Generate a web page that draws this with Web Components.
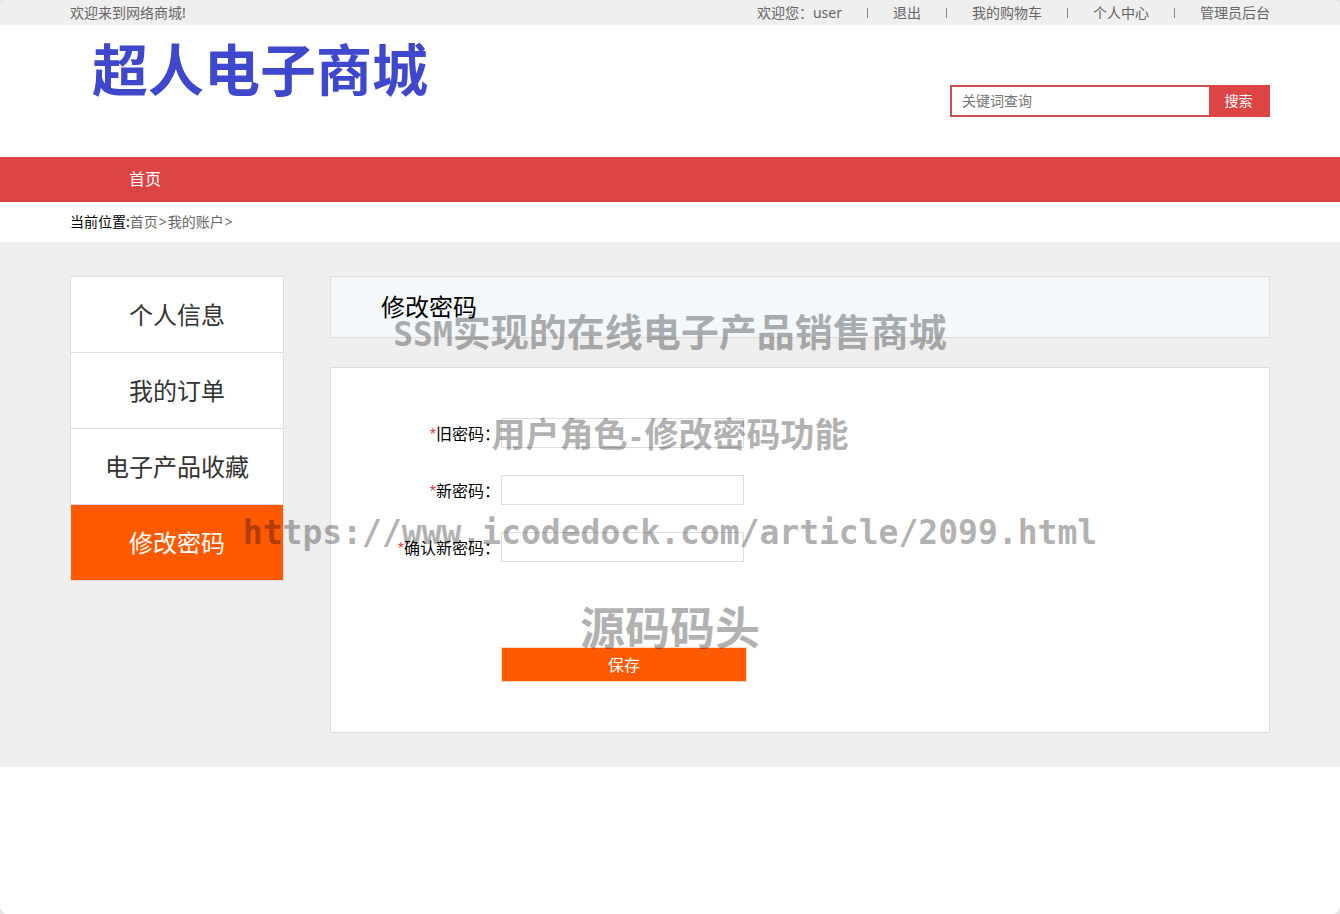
<!DOCTYPE html>
<html lang="zh-CN">
<head>
<meta charset="utf-8">
<meta name="viewport" content="width=device-width, initial-scale=1">
<title>修改密码</title>
<style>
  html { background: #e4e4e4; }
  body {
    margin: 0;
    font: 14px/24px "Noto Sans", "Noto Sans CJK SC", sans-serif;
    color: #000;
  }
</style>
</head>
<body>
<store-page>
  <top-bar slot="top"></top-bar>
  <store-header slot="top"></store-header>
  <store-nav slot="top"></store-nav>
  <bread-crumb slot="top"></bread-crumb>
  <account-menu slot="side"></account-menu>
  <page-title>修改密码</page-title>
  <password-form></password-form>
  <water-mark slot="overlay"></water-mark>
</store-page>

<script>
  const define = (name, html) => {
    const template = document.createElement('template');
    template.innerHTML = html;
    customElements.define(name, class extends HTMLElement {
      constructor() {
        super();
        this.attachShadow({ mode: 'open' }).append(template.content.cloneNode(true));
      }
    });
  };

  define('store-page', `
    <style>
      :host { display: block; position: relative; min-height: 100vh; background: #fff; border-radius: 8px; overflow: hidden; }
      main { background: #efefef; padding: 34px 0; }
      .row { display: grid; grid-template-columns: 214px minmax(0, 1fr); gap: 46px; align-items: start; max-width: 1200px; margin: 0 auto; }
      .content { display: grid; gap: 29px; }
    </style>
    <slot name="top"></slot>
    <main>
      <div class="row">
        <slot name="side"></slot>
        <div class="content"><slot></slot></div>
      </div>
    </main>
    <slot name="overlay"></slot>`);

  define('top-bar', `
    <style>
      :host { display: block; background: #efefef; color: #666; line-height: 25px; }
      .inner { display: flex; justify-content: space-between; max-width: 1200px; margin: 0 auto; }
      nav { display: flex; align-items: center; gap: 25px; }
      i { width: 1px; height: 10px; background: #888; }
      a { color: inherit; text-decoration: none; }
    </style>
    <div class="inner">
      <span>欢迎来到网络商城!</span>
      <nav>
        <span>欢迎您：user</span><i></i>
        <a href="#logout">退出</a><i></i>
        <a href="#cart">我的购物车</a><i></i>
        <a href="#account">个人中心</a><i></i>
        <a href="#admin">管理员后台</a>
      </nav>
    </div>`);

  define('store-header', `
    <style>
      :host { display: block; }
      .inner { display: flex; justify-content: space-between; align-items: flex-start; max-width: 1200px; margin: 0 auto; height: 132px; }
      .logo { margin: 16px 0 0 22px; font-size: 56px; line-height: 56px; font-weight: 700; color: #3f48cc; text-decoration: none; }
      form { display: flex; margin-top: 60px; width: 320px; height: 32px; }
      input { box-sizing: border-box; flex: 1; min-width: 0; border: 2px solid #c95150; border-right: 0; padding: 0 10px; font: inherit; background: #fff; outline: 0; }
      input::placeholder { color: #757575; opacity: 1; }
      button { width: 61px; border: 0; padding: 0 2px 0 0; background: #dd4545; color: #fff; font: inherit; }
    </style>
    <div class="inner">
      <a class="logo" href="#home">超人电子商城</a>
      <form role="search">
        <input type="text" aria-label="关键词查询" placeholder="关键词查询">
        <button type="button">搜索</button>
      </form>
    </div>`);

  define('store-nav', `
    <style>
      :host { display: block; background: #dd4444; }
      nav { max-width: 1200px; margin: 0 auto; }
      a { display: inline-block; padding: 0 59px; font-size: 16px; line-height: 45px; color: #fff; text-decoration: none; vertical-align: top; }
    </style>
    <nav><a href="#home">首页</a></nav>`);

  define('bread-crumb', `
    <style>
      :host { display: block; line-height: 40px; }
      nav { max-width: 1200px; margin: 0 auto; color: #666; }
      b { font-weight: 400; color: #000; }
      a { color: inherit; text-decoration: none; }
      i { display: inline-block; min-width: 10px; font-style: normal; text-align: center; }
    </style>
    <nav><b>当前位置:</b><a href="#home">首页</a><i>&gt;</i><a href="#account">我的账户</a><i>&gt;</i></nav>`);

  define('account-menu', `
    <style>
      :host { display: block; border: 1px solid #ddd; border-top: 0; background: #fff; }
      a { display: block; border-top: 1px solid #ddd; font-size: 24px; line-height: 75px; text-align: center; color: #333; text-decoration: none; }
      a[aria-current] { background: #ff5a00; color: #fff; }
    </style>
    <nav>
      <a href="#info">个人信息</a>
      <a href="#orders">我的订单</a>
      <a href="#favorites">电子产品收藏</a>
      <a href="#password" aria-current="page">修改密码</a>
    </nav>`);

  define('page-title', `
    <style>
      :host { display: block; border: 1px solid #ddd; background: #f4f8fb; padding: 0 50px; }
      h1 { margin: 0; font-size: 24px; line-height: 60px; font-weight: 400; }
    </style>
    <h1><slot></slot></h1>`);

  define('password-form', `
    <style>
      :host { display: block; border: 1px solid #ddd; background: #fff; padding: 50px 0; }
      form { display: grid; grid-template-columns: 169px 246px; column-gap: 1px; row-gap: 27px; font-size: 16px; line-height: 32px; }
      label { text-align: right; white-space: nowrap; height: 30px; }
      label span { color: #dd4444; font-family: "Liberation Sans", sans-serif; }
      input { box-sizing: border-box; width: 243px; height: 30px; border: 1px solid #ddd; padding: 0 8px; font: inherit; background: #fff; outline: 0; }
      button { grid-column: 2; height: 35px; margin-top: 58px; border: 1px solid #ffd9c2; padding: 0; background: #ff5a00; color: #fff; font: inherit; }
    </style>
    <form>
      <label for="old"><span>*</span>旧密码：</label><input id="old" type="password">
      <label for="new"><span>*</span>新密码：</label><input id="new" type="password">
      <label for="again"><span>*</span>确认新密码：</label><input id="again" type="password">
      <button type="button">保存</button>
    </form>`);

  define('water-mark', `
    <style>
      :host { position: absolute; top: 280px; left: 0; right: 0; display: grid; grid-template-rows: 104px 102px 94px 92px; align-items: center; justify-items: center; pointer-events: none; color: #000; opacity: .3; font-family: "Noto Sans CJK SC", sans-serif; font-weight: 700; white-space: nowrap; }
      div { font-size: 38px; line-height: 48px; }
      .role { font-size: 34px; }
      .role span { font-family: "DejaVu Sans Mono", monospace; font-size: 28px; }
      .brand { font-size: 45px; }
      .mono { font-family: "DejaVu Sans Mono", monospace; font-size: 33px; }
    </style>
    <div><span class="mono">SSM</span>实现的在线电子产品销售商城</div>
    <div class="role">用户角色<span>-</span>修改密码功能</div>
    <div class="mono">https://www.icodedock.com/article/2099.html</div>
    <div class="brand">源码码头</div>`);
</script>
</body>
</html>
